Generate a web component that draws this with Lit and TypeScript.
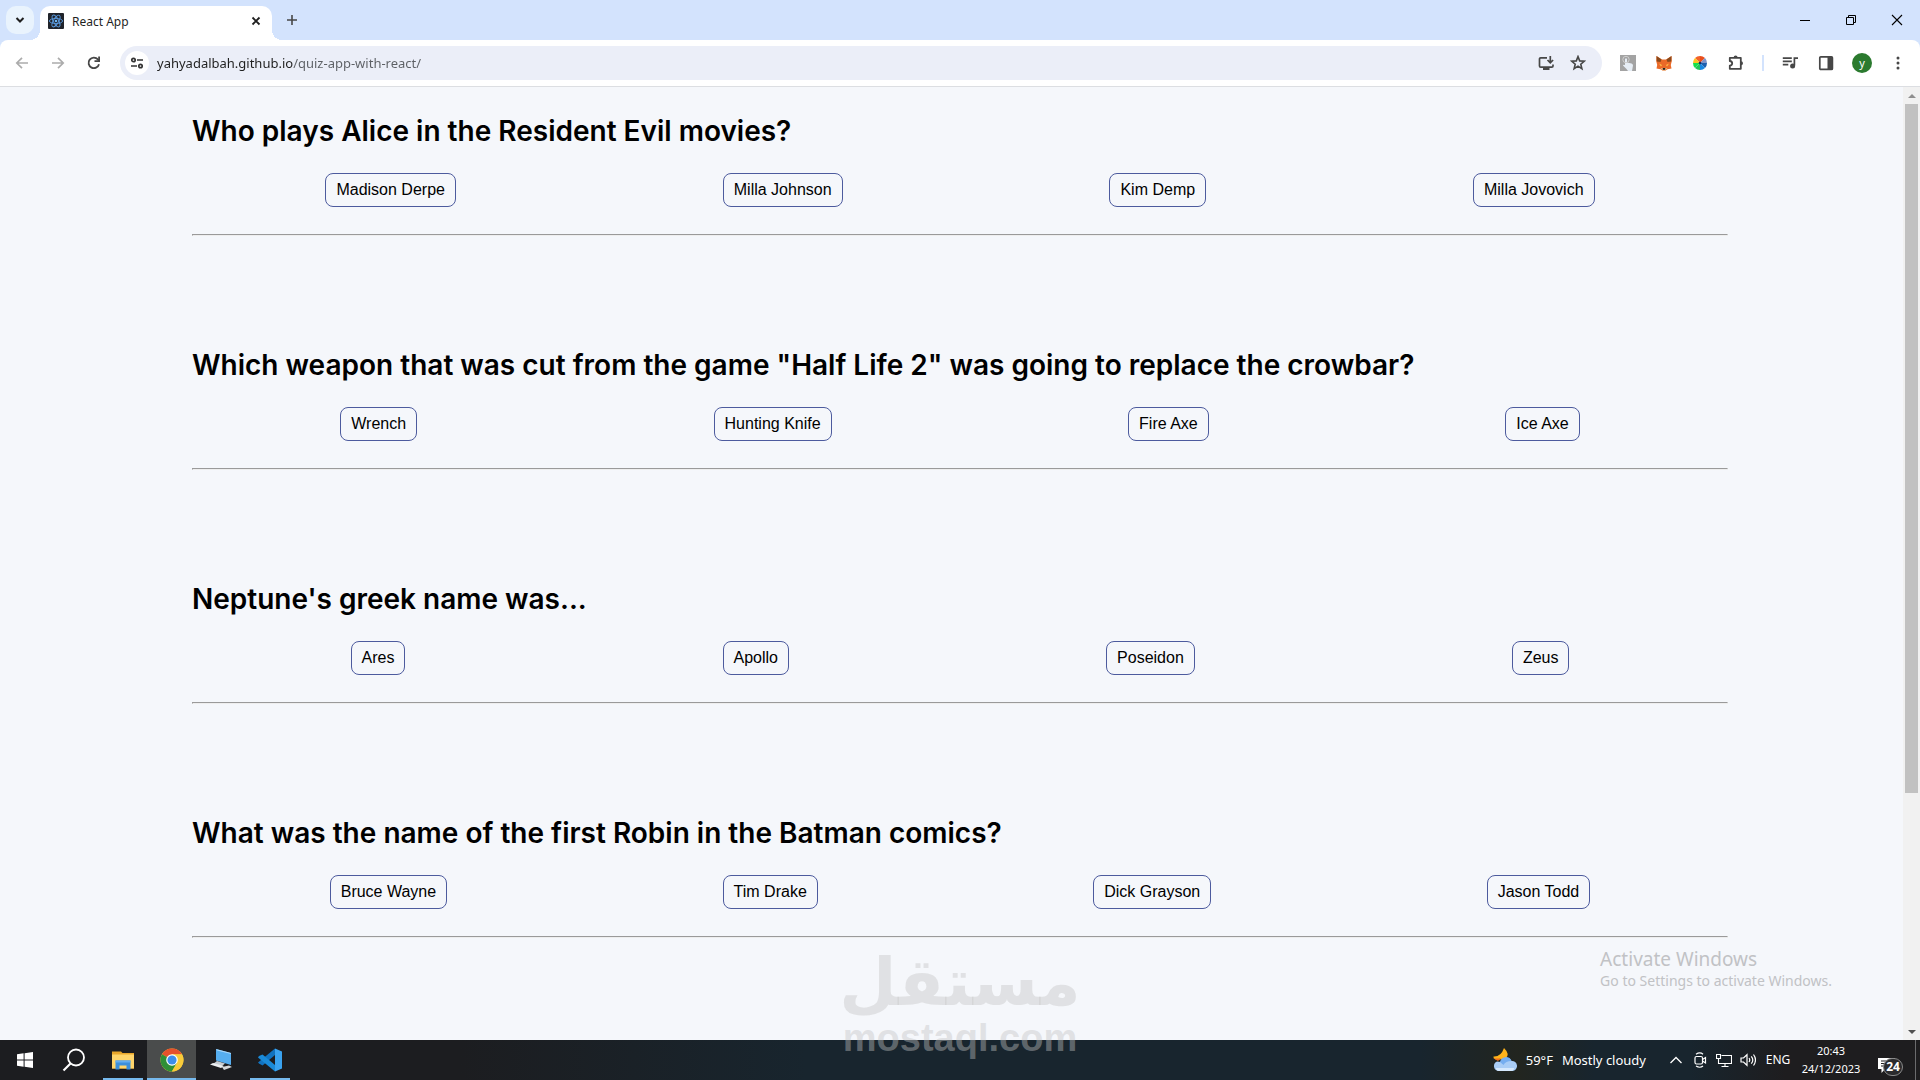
import { LitElement, html, css, svg } from "lit";
import { customElement, property } from "lit/decorators.js";
import { classMap } from "lit/directives/class-map.js";

const icons = {
  chevronDown: svg`<path d="M4.5 6 8 9.5 11.5 6" fill="none" stroke="#1f1f1f" stroke-width="2"/>`,
  react: svg`<rect width="16" height="16" rx="1" fill="#20232a"/>
    <g fill="none" stroke="#5a9be0" stroke-width="0.9">
      <ellipse cx="8" cy="8" rx="6.6" ry="2.6"/>
      <ellipse cx="8" cy="8" rx="6.6" ry="2.6" transform="rotate(60 8 8)"/>
      <ellipse cx="8" cy="8" rx="6.6" ry="2.6" transform="rotate(120 8 8)"/>
    </g><circle cx="8" cy="8" r="1.3" fill="#6db4f2"/>`,
  close: svg`<path d="M4.5 4.5 11.5 11.5M11.5 4.5 4.5 11.5" stroke="#1f1f1f" stroke-width="1.8"/>`,
  plus: svg`<path d="M8 3v10M3 8h10" stroke="#474747" stroke-width="1.6"/>`,
  minimize: svg`<path d="M3 8.5h10" stroke="#000"/>`,
  restore: svg`<path d="M3.5 5.5h7v7h-7zM5.5 5.500V3.500h7v7h-2" fill="none" stroke="#000"/>`,
  winClose: svg`<path d="M3 3l10 10M13 3 3 13" stroke="#000" stroke-width="1.1"/>`,
  back: svg`<path d="M14 8H3M8 2.800 2.800 8 8 13.200" fill="none" stroke="#acacac" stroke-width="1.7"/>`,
  forward: svg`<path d="M2 8h11M8 2.800 13.200 8 8 13.200" fill="none" stroke="#acacac" stroke-width="1.7"/>`,
  reload: svg`<path d="M13 9.200A5.300 5.300 0 1 1 11.900 4.400L13 5.600" fill="none" stroke="#474747" stroke-width="1.800"/><path d="M14 1.500V7H8.500V5.200h3.700V1.500z" fill="#474747"/>`,
  tune: svg`<g fill="none" stroke="#333" stroke-width="1.700"><circle cx="4.500" cy="5" r="1.700"/><circle cx="11.500" cy="11" r="1.700"/><path d="M8 5h6M2 11h6"/></g>`,
  install: svg`<path d="M9 2.800H2.700Q1.500 2.800 1.500 4v7q0 1.200 1.200 1.200h11.100q1.200 0 1.200-1.200V9.500M12.300 1v6.500M9.500 5l2.800 2.800L15.100 5" fill="none" stroke="#474747" stroke-width="1.700"/><path d="M5 12.500h6.500V15H5z" fill="#474747"/>`,
  star: svg`<path d="M8 1.600 9.700 5.900 14.300 6.200 10.800 9.200 11.900 13.700 8 11.200 4.100 13.700 5.200 9.200 1.700 6.200 6.300 5.900Z" fill="none" stroke="#474747" stroke-width="1.600"/>`,
  hand: svg`<rect width="16" height="16" fill="#a3a3a3"/><path d="M6.500 14 3 10.500Q3 9.300 5 10V4Q6 2.500 7 4v3.500l4.500 1q1.500.5 1.500 2L12 16H8z" fill="#e6edf5"/><circle cx="6" cy="4.500" r="3.200" fill="none" stroke="#cfcfcf"/>`,
  fox: svg`<path d="M.5 1 6 4.500h4L15.500 1l.3 5-1 4 .7 3.500-4 .8L9.500 15.500h-3l-2-1.200-4-.8L1.200 10l-1-4z" fill="#ea6a28"/>
    <path d="M.5 1 5.500 4.500 4.500 7 .8 6.500zM15.500 1l-5 3.500 1 2.500 3.700-.5z" fill="#8a4a1c"/><path d="M3 8.500 6 10l-1 1.500zM13 8.500 10 10l1 1.500z" fill="#ffc34d"/><path d="M4.500 13h7l-2 2.500h-3z" fill="#e8b37a"/><path d="M6.800 13h2.400v1.800H6.800z" fill="#222"/>`,
  wheel: svg`<g><path d="M8 8V1a7 7 0 0 1 5 2z" fill="#ea4e1b"/><path d="M8 8 3 3a7 7 0 0 1 5-2z" fill="#f2622a"/><path d="M8 8 13 3a7 7 0 0 1 2 5z" fill="#7d92c8"/><path d="M8 8h7a7 7 0 0 1-2 5z" fill="#1c5fae"/><path d="M8 8l5 5a7 7 0 0 1-5 2z" fill="#1787e0"/><path d="M8 8v7a7 7 0 0 1-5-2z" fill="#22c55a"/><path d="M8 8l-5 5a7 7 0 0 1-2-5z" fill="#16e04a"/><path d="M8 8H1a7 7 0 0 1 2-5z" fill="#ffc51f"/></g><circle cx="8" cy="8" r="1.300" fill="#1c2f66"/>`,
  puzzle: svg`<path d="M1.800 2.800H12.800V13.800H1.800V10.600Q4.200 10.400 4.200 8.300 4.200 6.200 1.800 6z" fill="none" stroke="#474747" stroke-width="1.800" stroke-linejoin="round"/><path d="M5.600 2.500a2 2 0 0 1 4 0zM13 6.200a2 2 0 0 1 0 4z" fill="#474747"/>`,
  queue: svg`<path d="M.8 3.200h9M.8 6.400h9M.8 9.600h5.500M12.400 10.500V3.200H16" fill="none" stroke="#474747" stroke-width="1.700"/><circle cx="10.600" cy="11" r="2.500" fill="#474747"/>`,
  panel: svg`<rect x="1.800" y="1.800" width="12.600" height="12.600" rx="1" fill="none" stroke="#474747" stroke-width="1.700"/><path d="M9.500 1.800h5v12.600h-5z" fill="#474747"/>`,
  dots: svg`<g fill="#474747"><circle cx="8" cy="3" r="1.500"/><circle cx="8" cy="8" r="1.500"/><circle cx="8" cy="13" r="1.500"/></g>`,
};

const taskIcons = {
  start: svg`<path d="M4 6.300 10.600 5.300V11.500H4zM11.600 5.200 20 4v7.500h-8.400zM4 12.500h6.600v6.200L4 17.700zM11.600 12.500H20V20l-8.400-1.200z" fill="#fff"/>`,
  search: svg`<circle cx="14" cy="9.500" r="8" fill="none" stroke="#fff" stroke-width="1.800"/><path d="M8.500 15.500 1.500 22.500" stroke="#fff" stroke-width="2.200"/>`,
  folder: svg`<path d="M1 3.500h9l1.500 1.500H23v15.500H1z" fill="#e9a72b"/><path d="M1 6.500h22v14H1z" fill="#ffd56b"/><path d="M4.500 21.500v-9h15v9h-4v-4h-7v4z" fill="#3b8fdb"/><path d="M4.500 12.500h15v2h-15z" fill="#63adf0"/>`,
  chrome: svg`<circle cx="12" cy="12" r="11.500" fill="#f8cb3a"/><path d="M12 12 2 6.250A11.500 11.500 0 0 1 22 6.250H12z" fill="#e6512c"/><path d="M2 6.250A11.500 11.500 0 0 0 11.900 23.500L17 14.900 12 12z" fill="#2f8f35"/><path d="M12 6.500H22.100A11.500 11.500 0 0 1 11.900 23.500L16.800 15z" fill="#f8cb3a"/><circle cx="12" cy="12" r="5.800" fill="#fff"/><circle cx="12" cy="12" r="4.600" fill="#3d8eea"/>`,
  computer: svg`<path d="M7 1 22 5v12L7 12.500z" fill="#56aef0"/><path d="M7 1 22 5v1L8 2.400z" fill="#a9d8fa"/><path d="M8 13l8 2.500-3 2.500-9-2z" fill="#c9ced3"/><path d="M1 16.500 4 15l11 3-3 2z" fill="#eceff1"/><path d="M13 19l7-1.500 3 1.500-8 3z" fill="#d5d8da"/>`,
  vscode: svg`<path d="M17 .5 24 3.500v17l-7 3z" fill="#3aa3f0"/><path d="M17 .5V7L4.500 17.500 1 15.500 0 14.500z" fill="#1173c0"/><path d="M17 23.500V17L4.500 6.500 1 8 0 9.500z" fill="#1a8ad8"/>`,
  cloud: svg`<path d="M11 0q6 6 2 10l-8 2q-5-1-4.500-3.500Q8 9 11 0z" fill="#ffb31a"/><path d="M0 10q4 1 8 0l-3 3z" fill="#f06a1d"/><path d="M5 23a5 5 0 0 1-1-9.500q2 0 3.500.5A6 6 0 0 1 18.500 13a5 5 0 0 1 1 10z" fill="#a9cdf6"/><path d="M7 14a6 6 0 0 1 11.500-1q-6 0-8 4z" fill="#76aef0"/><path d="M3 20h18q0 3-3 3H6q-3 0-3-3z" fill="#d6e9fd"/>`,
  up: svg`<path d="M2.500 11 8 5.500 13.500 11" fill="none" stroke="#fff" stroke-width="1.300"/>`,
  camera: svg`<g fill="none" stroke="#fff" stroke-width="1.200"><rect x="3" y="4.500" width="7.500" height="7.500" rx="1.500"/><path d="M10.500 7.500 13.500 5.500v5.500l-3-2M4 2.200q4-2.500 7 0M4 14q4 2.500 7 0"/></g>`,
  network: svg`<g fill="none" stroke="#fff" stroke-width="1.100"><path d="M5.500 3.500H15.500V11.500H2.500V7.500M9 11.500v3M5.500 14.500h7"/><path d="M.5 2.500h4v4h-4zM2.500 6.500v2"/></g>`,
  speaker: svg`<g fill="none" stroke="#fff" stroke-width="1.200"><path d="M1 6h2.500L7 2.700v10.600L3.500 10H1zM9 6q1.500 2 0 4M11.300 4.300q3 3.700 0 7.400M13.500 2.500q4 5.500 0 11"/></g>`,
  note: svg`<path d="M1 1h17v11H8l-3.500 4V12H1z" fill="#fff"/><path d="M4 4h11M4 6.500h11M4 9h8" stroke="#1d1d1f" stroke-width="1"/>`,
};

const questions = [
  { title: "Who plays Alice in the Resident Evil movies?", answers: ["Madison Derpe", "Milla Johnson", "Kim Demp", "Milla Jovovich"] },
  { title: 'Which weapon that was cut from the game "Half Life 2" was going to replace the crowbar?', answers: ["Wrench", "Hunting Knife", "Fire Axe", "Ice Axe"] },
  { title: "Neptune's greek name was...", answers: ["Ares", "Apollo", "Poseidon", "Zeus"] },
  { title: "What was the name of the first Robin in the Batman comics?", answers: ["Bruce Wayne", "Tim Drake", "Dick Grayson", "Jason Todd"] },
];

const shared = css`
  * { box-sizing: border-box; }
  button { font: inherit; color: inherit; border: 0; padding: 0; background: none; }
  svg { display: block; flex: none; }
`;

const icon = (shape: unknown, size = 16, box = 16) =>
  html`<svg width=${size} height=${size} viewBox="0 0 ${box} ${box}" aria-hidden="true">${shape}</svg>`;

@customElement("browser-chrome")
export class BrowserChrome extends LitElement {
  static styles = [shared, css`
    :host { display: block; background: #d3e3fd; font-family: "Noto Sans", sans-serif; color: #1f1f1f; }
    .strip { display: flex; height: 40px; padding: 6px 0 0 6px; }
    .search-tabs { display: grid; place-items: center; width: 28px; height: 28px; border-radius: 10px; background: #e9f3fd; }
    .tab { position: relative; display: flex; align-items: center; gap: 8px; width: 232px; margin-left: 6px; padding: 0 8px 4px; border-radius: 10px 10px 0 0; background: #fff; font-size: 12px; }
    .tab::before, .tab::after { content: ""; position: absolute; bottom: 0; width: 10px; height: 10px; }
    .tab::before { left: -10px; background: radial-gradient(circle at 0 0, transparent 10px, #fff 10px); }
    .tab::after { right: -10px; background: radial-gradient(circle at 100% 0, transparent 10px, #fff 10px); }
    .tab-title { flex: 1; }
    .new-tab { display: grid; place-items: center; width: 28px; height: 28px; margin-left: 6px; }
    .window { display: flex; margin: -6px 0 0 auto; }
    .window button { display: grid; place-items: center; width: 46px; height: 40px; }
    .toolbar { display: flex; align-items: center; padding: 6px 4px; border-bottom: 1px solid #dcdee2; border-radius: 8px 8px 0 0; background: #fff; }
    .tool { display: grid; place-items: center; width: 36px; height: 34px; }
    .omnibox { display: flex; flex: 1; align-items: center; height: 34px; margin: 0 8px; padding: 0 8px 0 5px; border-radius: 17px; background: #ebeef8; }
    .site { display: grid; place-items: center; width: 24px; height: 24px; border-radius: 50%; background: #fff; }
    .url { flex: 1; min-width: 0; margin: 0 8px; padding: 0; border: 0; outline: 0; font: 13px/20px "Noto Sans", sans-serif; color: #1f1f1f; -webkit-text-fill-color: transparent; background: linear-gradient(90deg, #1f1f1f 136px, #5c5f64 136px); -webkit-background-clip: text; background-clip: text; }
    .in-box { display: grid; place-items: center; width: 32px; height: 32px; }
    .rule { width: 2px; height: 16px; margin: 0 8px; background: #d3e3fd; }
    .avatar { display: grid; place-items: center; width: 20px; height: 20px; border-radius: 50%; background: #2b7a2f; color: #fff; font-size: 11px; line-height: 16px; }
  `];

  private tool(label: string, content: unknown) {
    return html`<button class="tool" aria-label=${label}>${content}</button>`;
  }

  render() {
    return html`
      <div class="strip">
        <button class="search-tabs" aria-label="Search tabs">${icon(icons.chevronDown)}</button>
        <div class="tab">
          ${icon(icons.react)}<span class="tab-title">React App</span>
          <button aria-label="Close tab">${icon(icons.close)}</button>
        </div>
        <button class="new-tab" aria-label="New tab">${icon(icons.plus)}</button>
        <div class="window">
          <button aria-label="Minimize">${icon(icons.minimize)}</button>
          <button aria-label="Restore">${icon(icons.restore)}</button>
          <button aria-label="Close">${icon(icons.winClose)}</button>
        </div>
      </div>
      <div class="toolbar">
        ${this.tool("Back", icon(icons.back))}
        ${this.tool("Forward", icon(icons.forward))}
        ${this.tool("Reload", icon(icons.reload))}
        <div class="omnibox">
          <button class="site" aria-label="View site information">${icon(icons.tune)}</button>
          <input class="url" type="text" aria-label="Address" value="yahyadalbah.github.io/quiz-app-with-react/" />
          <button class="in-box" aria-label="Install app">${icon(icons.install)}</button>
          <button class="in-box" aria-label="Bookmark">${icon(icons.star)}</button>
        </div>
        ${this.tool("Pointer extension", icon(icons.hand))}
        ${this.tool("Wallet extension", icon(icons.fox))}
        ${this.tool("Color extension", icon(icons.wheel))}
        ${this.tool("Extensions", icon(icons.puzzle))}
        <span class="rule"></span>
        ${this.tool("Media", icon(icons.queue))}
        ${this.tool("Side panel", icon(icons.panel))}
        ${this.tool("Profile", html`<span class="avatar">y</span>`)}
        ${this.tool("Menu", icon(icons.dots))}
      </div>`;
  }
}

@customElement("quiz-question")
export class QuizQuestion extends LitElement {
  @property() heading = "";
  @property({ attribute: false }) answers: string[] = [];

  static styles = [shared, css`
    :host { display: block; color: #000; }
    h2 { margin: 0; font: 600 28px/40px Inter, sans-serif; white-space: nowrap; }
    .answers { display: flex; justify-content: space-around; margin: 22px 0 27px; font: 16px/18px "Liberation Sans", Arial, sans-serif; }
    .answers button { padding: 7px 10px; border: 1px solid #4d5b9e; border-radius: 8px; }
    hr { margin: 0; border: 1px solid; border-color: #9a9a9a #eeeeee #eeeeee #9a9a9a; }
  `];

  render() {
    return html`
      <h2>${this.heading}</h2>
      <div class="answers">${this.answers.map((a) => html`<button>${a}</button>`)}</div>
      <hr />`;
  }
}

@customElement("task-bar")
export class TaskBar extends LitElement {
  static styles = [shared, css`
    :host { display: flex; height: 40px; color: #fff; font: 13px/18px "Noto Sans", sans-serif; background: linear-gradient(90deg, #1c1d20 0, #1c1d20 24%, #18252e 42%, #18252e 74%, #22251f 79%, #18252e 83%, #18252e 88%, #1e1d1f 93%); }
    .app { display: grid; place-items: center; position: relative; width: 49px; }
    .app.active { background: #4a4c4c; }
    .app.open::after { content: ""; position: absolute; bottom: 0; left: 5px; right: 4px; height: 2px; background: #76b9ed; }
    .app.active::after { left: 0; right: 0; }
    .tray { display: flex; margin-left: auto; }
    .weather { display: flex; align-items: center; gap: 9px; margin-right: 18px; }
    .icon { display: grid; place-items: center; width: 24px; }
    .lang { width: 36px; font-size: 12px; }
    .clock { display: grid; align-content: center; width: 70px; text-align: center; font-size: 11px; }
    .notes { position: relative; width: 49px; padding: 11px 0 0 11px; }
    .badge { position: absolute; left: 17px; top: 18px; min-width: 20px; border: 1px solid #8a8a8a; border-radius: 9px; background: #2b2b2d; font-size: 12px; font-weight: 700; line-height: 16px; text-align: center; }
    .desktop { width: 5px; border-left: 1px solid #6b6b6d; }
  `];

  private app(label: string, shape: unknown, open = false, active = false) {
    return html`<button class=${classMap({ app: true, open, active })} aria-label=${label}>${icon(shape, 24, 24)}</button>`;
  }

  render() {
    return html`
      ${this.app("Start", taskIcons.start)}
      ${this.app("Search", taskIcons.search)}
      ${this.app("File Explorer", taskIcons.folder, true)}
      ${this.app("Chrome", taskIcons.chrome, true, true)}
      ${this.app("This PC", taskIcons.computer)}
      ${this.app("Code", taskIcons.vscode, true)}
      <div class="tray">
        <button class="weather">${icon(taskIcons.cloud, 24, 24)}<span>59°F</span><span>Mostly cloudy</span></button>
        <button class="icon" aria-label="Show hidden icons">${icon(taskIcons.up)}</button>
        <button class="icon" aria-label="Camera">${icon(taskIcons.camera)}</button>
        <button class="icon" aria-label="Network">${icon(taskIcons.network)}</button>
        <button class="icon" aria-label="Volume">${icon(taskIcons.speaker)}</button>
        <button class="lang">ENG</button>
        <button class="clock"><span>20:43</span><span>24/12/2023</span></button>
        <button class="notes" aria-label="Notifications">${icon(taskIcons.note, 18, 18)}<span class="badge">24</span></button>
        <button class="desktop" aria-label="Show desktop"></button>
      </div>`;
  }
}

@customElement("app-root")
export class AppRoot extends LitElement {
  static styles = [shared, css`
    :host { position: relative; display: flex; flex-direction: column; height: 100vh; overflow: hidden; background: #f5f7fb; }
    .view { display: flex; flex: 1; min-height: 0; }
    main { display: flex; flex: 1; flex-direction: column; gap: 109px; padding: 24px 0 0 10vw; overflow: hidden; }
    quiz-question { width: 80vw; }
    .scroll { display: flex; flex-direction: column; width: 17px; background: #f1f1f1; }
    .arrow { display: grid; place-items: center; height: 17px; }
    .track { flex: 1; padding: 0 2px; }
    .thumb { height: 75%; background: #c1c1c1; }
    .activate { position: absolute; right: 88px; bottom: 89px; color: #c1c2c5; font: 14px/20px "Noto Sans", sans-serif; }
    .activate strong { display: block; font-size: 19px; font-weight: 400; line-height: 24px; }
    .brand { position: absolute; left: 50%; bottom: 20px; display: flex; flex-direction: column; align-items: center; transform: translateX(-50%); color: rgba(195, 195, 195, 0.42); font-family: "DejaVu Sans", sans-serif; font-weight: 700; pointer-events: none; }
    .brand-name { font-size: 66px; line-height: 66px; }
    .brand-site { font: 700 38px/44px "Liberation Sans", sans-serif; }
  `];

  render() {
    return html`
      <browser-chrome></browser-chrome>
      <div class="view">
        <main>
          ${questions.map((q) => html`<quiz-question .heading=${q.title} .answers=${q.answers}></quiz-question>`)}
        </main>
        <div class="scroll">
          <div class="arrow"><svg width="8" height="4" viewBox="0 0 8 4"><path d="M0 4 4 0l4 4z" fill="#8f8f8f"/></svg></div>
          <div class="track"><div class="thumb"></div></div>
          <div class="arrow"><svg width="8" height="4" viewBox="0 0 8 4"><path d="M0 0h8L4 4z" fill="#505050"/></svg></div>
        </div>
      </div>
      <task-bar></task-bar>
      <div class="activate"><strong>Activate Windows</strong>Go to Settings to activate Windows.</div>
      <div class="brand"><span class="brand-name" lang="ar" dir="rtl">مستقل</span><span class="brand-site">mostaql.com</span></div>`;
  }
}
